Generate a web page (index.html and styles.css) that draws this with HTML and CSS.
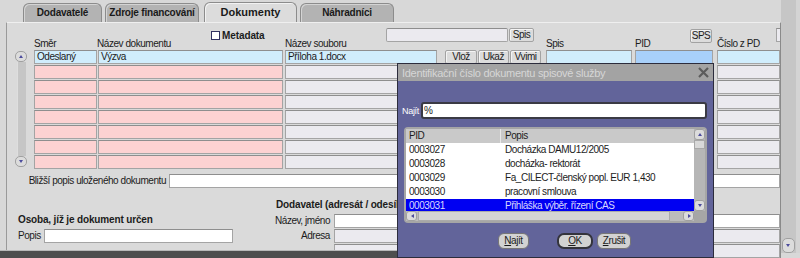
FILE: index.html
```html
<!DOCTYPE html>
<html lang="cs">
<head>
    <meta charset="UTF-8">
    <title>Dokumenty</title>
    <link rel="stylesheet" href="styles.css">
</head>
<body>
    <div class="screen">
        <div class="main">
            <div class="app">
                <div class="tabs">
                    <div class="tab">Dodavatelé</div>
                    <div class="tab">Zdroje financování</div>
                    <div class="tab active">Dokumenty</div>
                    <div class="tab">Náhradníci</div>
                </div>
                <div class="panel">
                    <div class="head">
                        <div class="toolbar">
                            <label class="meta"><span class="check"></span>Metadata</label>
                            <span class="field soft spis-input"></span>
                            <span class="btn spis-btn">Spis</span>
                            <span class="btn sps-btn">SPS</span>
                            <span class="field soft stub"></span>
                        </div>
                        <div class="labels">
                            <span class="col-smer">Směr</span>
                            <span class="col-nazev">Název dokumentu</span>
                            <span class="col-soubor">Název souboru</span>
                            <span class="col-spis">Spis</span>
                            <span class="col-pid">PID</span>
                            <span class="col-cislo">Číslo z PD</span>
                        </div>
                    </div>

                    <div class="table">
                        <div class="scroller">
                            <span class="sbtn up"></span>
                            <span class="track"></span>
                            <span class="sbtn down"></span>
                        </div>
                        <div class="rows">
                            <div class="row current">
                                <span class="field blue c-smer">Odeslaný</span>
                                <span class="field blue c-nazev">Výzva</span>
                                <span class="field blue c-soubor">Příloha 1.docx</span>
                                <span class="btn cell-btn first">Vlož</span>
                                <span class="btn cell-btn">Ukaž</span>
                                <span class="btn cell-btn">Vvimi</span>
                                <span class="field blue c-spis"></span>
                                <span class="field pid c-pid"></span>
                                <span class="field blue c-cislo"></span>
                            </div>
                            <div class="row">
                                <span class="field pink c-smer"></span>
                                <span class="field pink c-nazev"></span>
                                <span class="field soft c-soubor"></span>
                                <span class="field soft c-spis skip"></span>
                                <span class="field soft c-pid"></span>
                                <span class="field soft c-cislo"></span>
                            </div>
                            <div class="row">
                                <span class="field pink c-smer"></span>
                                <span class="field pink c-nazev"></span>
                                <span class="field soft c-soubor"></span>
                                <span class="field soft c-spis skip"></span>
                                <span class="field soft c-pid"></span>
                                <span class="field soft c-cislo"></span>
                            </div>
                            <div class="row">
                                <span class="field pink c-smer"></span>
                                <span class="field pink c-nazev"></span>
                                <span class="field soft c-soubor"></span>
                                <span class="field soft c-spis skip"></span>
                                <span class="field soft c-pid"></span>
                                <span class="field soft c-cislo"></span>
                            </div>
                            <div class="row">
                                <span class="field pink c-smer"></span>
                                <span class="field pink c-nazev"></span>
                                <span class="field soft c-soubor"></span>
                                <span class="field soft c-spis skip"></span>
                                <span class="field soft c-pid"></span>
                                <span class="field soft c-cislo"></span>
                            </div>
                            <div class="row">
                                <span class="field pink c-smer"></span>
                                <span class="field pink c-nazev"></span>
                                <span class="field soft c-soubor"></span>
                                <span class="field soft c-spis skip"></span>
                                <span class="field soft c-pid"></span>
                                <span class="field soft c-cislo"></span>
                            </div>
                            <div class="row">
                                <span class="field pink c-smer"></span>
                                <span class="field pink c-nazev"></span>
                                <span class="field soft c-soubor"></span>
                                <span class="field soft c-spis skip"></span>
                                <span class="field soft c-pid"></span>
                                <span class="field soft c-cislo"></span>
                            </div>
                            <div class="row">
                                <span class="field pink c-smer"></span>
                                <span class="field pink c-nazev"></span>
                                <span class="field soft c-soubor"></span>
                                <span class="field soft c-spis skip"></span>
                                <span class="field soft c-pid"></span>
                                <span class="field soft c-cislo"></span>
                            </div>
                        </div>
                    </div>

                    <div class="desc">
                        <span class="desc-label">Bližší popis uloženého dokumentu</span>
                        <span class="field white desc-field"></span>
                    </div>

                    <div class="lower">
                        <div class="person">
                            <div class="section-title">Osoba, jíž je dokument určen</div>
                            <div class="line">
                                <span class="line-label short">Popis</span>
                                <span class="field white popis-field"></span>
                            </div>
                        </div>
                        <div class="supplier">
                            <div class="section-title">Dodavatel (adresát / odesílatel)</div>
                            <div class="line">
                                <span class="line-label">Název, jméno</span>
                                <span class="field white wide-field"></span>
                            </div>
                            <div class="line">
                                <span class="line-label">Adresa</span>
                                <span class="field soft wide-field"></span>
                            </div>
                            <div class="line">
                                <span class="line-label"></span>
                                <span class="field soft wide-field"></span>
                            </div>
                        </div>
                    </div>
                </div>
            </div>
            <div class="side-scroll">
                <span class="sbtn down"></span>
            </div>
        </div>
        <div class="status"></div>

        <!-- LOV dialog over the form -->
        <div class="dialog">
            <div class="dialog-title">
                <span>Identifikační číslo dokumentu spisové služby</span>
                <svg class="close" width="11" height="11" viewBox="0 0 11 11">
                    <path d="M1 1 L10 10 M10 1 L1 10" stroke="#5c5c5c" stroke-width="2.2"/>
                </svg>
            </div>
            <div class="dialog-body">
                <div class="find">
                    <span class="find-label">Najít</span>
                    <span class="find-input">%</span>
                </div>
                <div class="list">
                    <div class="list-main">
                        <div class="list-rows">
                            <div class="lrow lhead"><span class="l-pid">PID</span><span class="l-popis">Popis</span></div>
                            <div class="lrow"><span class="l-pid">0003027</span><span class="l-popis">Docházka DAMU12/2005</span></div>
                            <div class="lrow"><span class="l-pid">0003028</span><span class="l-popis">docházka- rektorát</span></div>
                            <div class="lrow"><span class="l-pid">0003029</span><span class="l-popis">Fa_CILECT-členský popl. EUR 1,430</span></div>
                            <div class="lrow"><span class="l-pid">0003030</span><span class="l-popis">pracovní smlouva</span></div>
                            <div class="lrow selected"><span class="l-pid">0003031</span><span class="l-popis">Přihláška výběr. řízení CAS</span></div>
                        </div>
                        <div class="lscroll">
                            <span class="sbtn up"></span>
                            <span class="thumb"></span>
                            <span class="sbtn down"></span>
                        </div>
                    </div>
                    <div class="hscroll">
                        <span class="sbtn left"></span>
                        <span class="hthumb"></span>
                        <span class="sbtn right"></span>
                    </div>
                </div>
                <div class="actions">
                    <span class="dbtn find-btn"><u>N</u>ajít</span>
                    <span class="dbtn ok-btn"><u>O</u>K</span>
                    <span class="dbtn cancel-btn"><u>Z</u>rušit</span>
                </div>
            </div>
        </div>
    </div>
</body>
</html>
```

FILE: styles.css
```css
* {
    box-sizing: border-box;
}
body {
    margin: 0;
    font-family: "Liberation Sans", Arial, sans-serif;
    font-size: 10px;
    letter-spacing: -0.45px;
    color: #1c1c1c;
    background: #d8d8d8;
}
.screen {
    position: relative;
    width: 800px;
    height: 258px;
    overflow: hidden;
}
.main {
    display: flex;
    height: 258px;
}
.app {
    width: 781px;
    display: flex;
    flex-direction: column;
}

/* tabs */
.tabs {
    display: flex;
    align-items: flex-end;
    flex-shrink: 0;
    height: 22px;
    padding-left: 23px;
    gap: 3px;
}
.tab {
    width: 79px;
    height: 19px;
    background: #b3b3b3;
    border: 1px solid #8c8c8c;
    border-bottom: none;
    border-radius: 6px 6px 0 0;
    box-shadow: inset 1px 1px 0 #d4d4d4;
    font-weight: bold;
    font-size: 10px;
    letter-spacing: -0.2px;
    text-align: center;
    line-height: 18px;
    color: #1a1a1a;
}
.tab:nth-child(2),
.tab:nth-child(4) {
    width: 94px;
}
.tab.active {
    width: 93px;
    height: 20px;
    margin-left: 2px;
    background: #dcdcdc;
    font-size: 11px;
    letter-spacing: 0;
    box-shadow: inset 1px 1px 0 #f2f2f2;
}

.panel {
    flex: 1;
    min-height: 0;
    overflow: hidden;
    margin-left: 6px;
    border-top: 1px solid #efefef;
    border-left: 1px solid #9a9a9a;
    border-right: 1px solid #8a8a8a;
    background: #dadada;
    display: flex;
    flex-direction: column;
}
.panel > div {
    flex-shrink: 0;
}

/* header area: toolbar and column labels share one cell */
.head {
    display: grid;
    height: 22px;
    margin-top: 5px;
}
.head > div {
    grid-area: 1 / 1;
}
.toolbar {
    display: flex;
    align-items: flex-start;
}
.meta {
    display: flex;
    align-items: flex-start;
    width: 175px;
    margin-left: 204px;
    margin-top: 3px;
    font-weight: bold;
    font-size: 10px;
    letter-spacing: -0.1px;
    line-height: 10px;
}
.check {
    width: 9px;
    height: 9px;
    margin-right: 2px;
    background: #fff;
    border: 1px solid #303060;
}
.spis-input {
    width: 122px;
    height: 14px;
    border-radius: 2px;
}
.btn {
    display: inline-flex;
    align-items: center;
    justify-content: center;
    height: 14px;
    background: #dcdcdc;
    border: 1px solid #a2a2a2;
    border-radius: 2px;
    box-shadow: inset 1px 1px 0 #f4f4f4;
    line-height: 12px;
}
.spis-btn {
    width: 25px;
    margin-left: 1px;
}
.sps-btn {
    width: 22px;
    margin-left: 156px;
    margin-top: 1px;
}
.stub {
    width: 20px;
    height: 14px;
    margin-left: 64px;
}
.labels {
    align-self: end;
    display: flex;
    padding-left: 27px;
    line-height: 11px;
    padding-bottom: 1px;
}
.col-smer { width: 63px; }
.col-nazev { width: 188px; }
.col-soubor { width: 261px; }
.col-spis { width: 89px; }
.col-pid { width: 82px; }

/* multi-row block */
.table {
    display: flex;
}
.scroller {
    width: 12px;
    height: 116px;
    margin-top: 1px;
    margin-left: 8px;
    display: flex;
    flex-direction: column;
    align-items: center;
}
.scroller .track {
    flex: 1;
    width: 9px;
    background: #c6c6c6;
    border-left: 1px solid #dedede;
}
.sbtn {
    position: relative;
    display: block;
    flex-shrink: 0;
    width: 12px;
    height: 11px;
    background: #dcdcdc;
    border: 1px solid #a0a0a0;
    border-radius: 5px;
}
.sbtn::after {
    content: "";
    position: absolute;
    left: 3px;
    top: 3px;
    border-left: 2.5px solid transparent;
    border-right: 2.5px solid transparent;
}
.sbtn.up::after {
    border-bottom: 3px solid #4c4c9c;
}
.sbtn.down::after {
    border-top: 3px solid #4c4c9c;
}
.sbtn.left::after {
    left: 4px;
    top: 2px;
    border: none;
    border-top: 2.5px solid transparent;
    border-bottom: 2.5px solid transparent;
    border-right: 3px solid #4c4c9c;
}
.sbtn.right::after {
    left: 4px;
    top: 2px;
    border: none;
    border-top: 2.5px solid transparent;
    border-bottom: 2.5px solid transparent;
    border-left: 3px solid #4c4c9c;
}
.rows {
    margin-left: 7px;
    display: flex;
    flex-direction: column;
    gap: 1px;
}
.row {
    display: flex;
    height: 14px;
}
.field {
    display: block;
    flex-shrink: 0;
    height: 14px;
    border: 1px solid #a4a4a4;
    border-top-color: #8e8e8e;
    padding-left: 2px;
    line-height: 12px;
    white-space: nowrap;
    overflow: hidden;
}
.blue { background: #d0edfc; }
.pid { background: #a8d0fa; }
.pink { background: #fdd2d2; }
.soft { background: #ebeaef; }
.white { background: #ffffff; }

.c-smer { width: 63px; }
.c-nazev { width: 185px; margin-left: 1px; }
.c-soubor { width: 152px; margin-left: 2px; }
.c-spis { width: 86px; margin-left: 5px; }
.c-spis.skip { margin-left: 109px; }
.c-pid { width: 78px; margin-left: 3px; }
.c-cislo { width: 63px; margin-left: 4px; }
.cell-btn {
    width: 31px;
    margin-left: 1px;
}
.cell-btn.first {
    width: 32px;
    margin-left: 8px;
}

.desc {
    display: flex;
    margin-top: 5px;
}
.desc-label {
    width: 159px;
    text-align: right;
    line-height: 14px;
    white-space: nowrap;
}
.desc-field {
    width: 611px;
    margin-left: 3px;
}

.lower {
    display: flex;
}
.section-title {
    font-weight: bold;
    font-size: 10px;
    letter-spacing: -0.15px;
    line-height: 12px;
    white-space: nowrap;
}
.person {
    width: 254px;
    margin-left: 11px;
    padding-top: 26px;
}
.supplier {
    padding-top: 11px;
}
.supplier .section-title {
    width: 125px;
    padding-left: 4px;
    overflow: hidden;
}
.line {
    display: flex;
    margin-top: 3px;
}
.supplier .line + .line {
    margin-top: 1px;
}
.line-label {
    width: 58px;
    text-align: right;
    line-height: 14px;
    white-space: nowrap;
}
.line-label.short {
    width: 22px;
    text-align: left;
}
.popis-field {
    width: 189px;
    margin-left: 4px;
}
.wide-field {
    width: 446px;
    margin-left: 4px;
}

.side-scroll {
    width: 19px;
    height: 253px;
    background: #c6c6c6;
    border-right: 4px solid #d4d4d4;
    display: flex;
    flex-direction: column;
    justify-content: flex-end;
    padding-left: 1px;
}
.side-scroll .sbtn {
    width: 13px;
    height: 15px;
}
.side-scroll .sbtn::after {
    left: 3px;
    top: 5px;
}

/* dark strip along the bottom edge, under the dialog */
.status {
    position: absolute;
    left: 0;
    bottom: 0;
    width: 713px;
    height: 8px;
    background: #4e4e4e;
    border-top: 1px solid #b8b8b8;
}

/* dialog */
.dialog {
    position: absolute;
    left: 397px;
    top: 63px;
    width: 317px;
    height: 195px;
    border: 1px solid #2c2c3c;
    background: #62649a;
}
.dialog-title {
    display: flex;
    align-items: center;
    justify-content: space-between;
    height: 17px;
    padding: 0 4px 0 4px;
    background: #a3a3a3;
    color: #d6d6d6;
    font-size: 11px;
    letter-spacing: -0.3px;
}
.find {
    display: flex;
    align-items: center;
    margin-top: 21px;
    padding-left: 4px;
}
.find-label {
    width: 19px;
    color: #ffffff;
    font-size: 9px;
    letter-spacing: -0.3px;
    white-space: nowrap;
}
.find-input {
    width: 286px;
    height: 17px;
    background: #fff;
    border: 2px solid #3a3a44;
    border-radius: 3px;
    padding-left: 1px;
    line-height: 13px;
}
.list {
    width: 303px;
    height: 96px;
    margin-top: 8px;
    margin-left: 6px;
    padding: 2px;
    background: #a6a6a6;
    border-radius: 4px;
}
.list-main {
    display: flex;
    height: 82px;
}
.list-rows {
    width: 288px;
    background: #fff;
    overflow: hidden;
}
.lrow {
    display: flex;
    height: 14px;
    line-height: 14px;
    white-space: nowrap;
}
.lhead {
    background: #c9c9c9;
}
.l-pid {
    width: 95px;
    padding-left: 3px;
}
.lhead .l-pid {
    border-right: 1px solid #e8e8e8;
}
.l-popis {
    padding-left: 4px;
}
.lrow.selected {
    height: 12px;
    line-height: 12px;
    padding-top: 1px;
    overflow: hidden;
    background: #0000f2;
    color: #d8d8ff;
}
.lscroll {
    width: 11px;
    display: flex;
    flex-direction: column;
    background: #b6b6b6;
}
.lscroll .sbtn,
.hscroll .sbtn {
    width: 11px;
    height: 11px;
    border-radius: 3px;
}
.lscroll .thumb {
    height: 9px;
    background: #d8d8d8;
    border: 1px solid #a8a8a8;
    margin-bottom: auto;
}
.hscroll {
    display: flex;
    height: 10px;
    width: 288px;
    background: #bcbcbc;
}
.hscroll .sbtn {
    height: 10px;
}
.hthumb {
    width: 252px;
    margin-left: 1px;
    background: #d4d4d4;
    border: 1px solid #aaaaaa;
    margin-right: auto;
}
.actions {
    display: flex;
    margin-top: 10px;
    padding-left: 100px;
}
.dbtn {
    display: flex;
    align-items: center;
    justify-content: center;
    height: 16px;
    background: #d2d2d2;
    border: 1px solid #767676;
    border-radius: 6px;
    line-height: 12px;
}
.find-btn { width: 31px; }
.ok-btn {
    width: 36px;
    margin-left: 28px;
    border: 2px solid #34343c;
    border-radius: 7px;
}
.cancel-btn {
    width: 34px;
    margin-left: 4px;
}
```
